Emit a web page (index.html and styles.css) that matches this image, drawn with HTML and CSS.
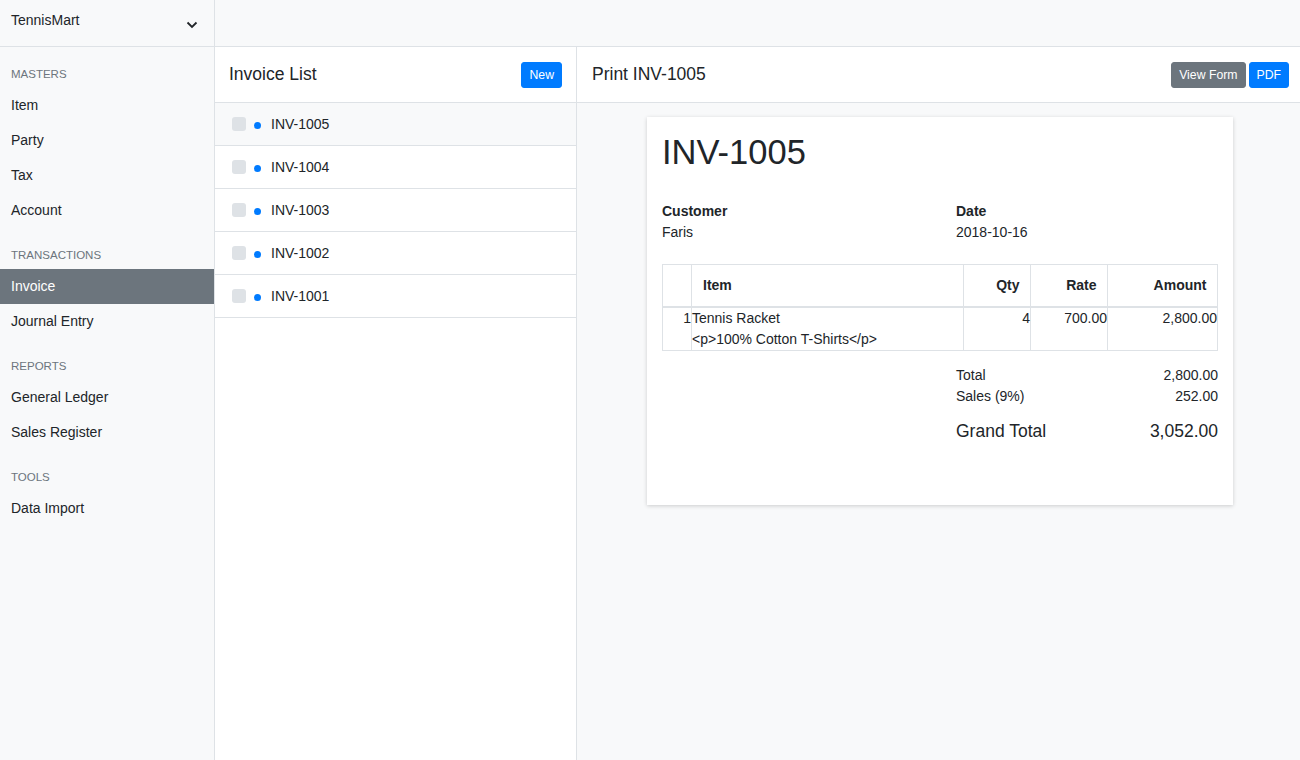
FILE: index.html
```html
<!DOCTYPE html>
<html>
<head>
<meta charset="utf-8">
<title>TennisMart</title>
<link rel="stylesheet" href="styles.css">
</head>
<body>
<div class="app">
  <aside class="sidebar">
    <div class="sidebar-head">
      <span class="brand">TennisMart</span>
      <svg class="chev" width="12" height="8" viewBox="0 0 12 8"><path d="M1.5 1.5 L6 6 L10.5 1.5" fill="none" stroke="#212529" stroke-width="1.8"/></svg>
    </div>
    <div class="nav-heading">Masters</div>
    <a class="nav-item">Item</a>
    <a class="nav-item">Party</a>
    <a class="nav-item">Tax</a>
    <a class="nav-item">Account</a>
    <div class="nav-heading">Transactions</div>
    <a class="nav-item active">Invoice</a>
    <a class="nav-item">Journal Entry</a>
    <div class="nav-heading">Reports</div>
    <a class="nav-item">General Ledger</a>
    <a class="nav-item">Sales Register</a>
    <div class="nav-heading">Tools</div>
    <a class="nav-item">Data Import</a>
  </aside>
  <main class="main">
    <div class="topbar"></div>
    <div class="panes">
      <section class="list-pane">
        <div class="pane-head">
          <h5 class="pane-title">Invoice List</h5>
          <button class="btn btn-primary">New</button>
        </div>
        <div class="list-row selected"><span class="check"></span><span class="dot"></span><span>INV-1005</span></div>
        <div class="list-row"><span class="check"></span><span class="dot"></span><span>INV-1004</span></div>
        <div class="list-row"><span class="check"></span><span class="dot"></span><span>INV-1003</span></div>
        <div class="list-row"><span class="check"></span><span class="dot"></span><span>INV-1002</span></div>
        <div class="list-row"><span class="check"></span><span class="dot"></span><span>INV-1001</span></div>
      </section>
      <section class="print-pane">
        <div class="pane-head print-head">
          <h5 class="pane-title">Print INV-1005</h5>
          <div class="btn-group">
            <button class="btn btn-secondary">View Form</button>
            <button class="btn btn-primary">PDF</button>
          </div>
        </div>
        <div class="print-body">
          <div class="doc">
            <h1 class="doc-title">INV-1005</h1>
            <div class="doc-grid">
              <div>
                <div class="label">Customer</div>
                <div>Faris</div>
              </div>
              <div>
                <div class="label">Date</div>
                <div>2018-10-16</div>
              </div>
            </div>
            <table class="items">
              <colgroup>
                <col class="c-no"><col class="c-item"><col class="c-qty"><col class="c-rate"><col class="c-amt">
              </colgroup>
              <thead>
                <tr><th></th><th class="left">Item</th><th>Qty</th><th>Rate</th><th>Amount</th></tr>
              </thead>
              <tbody>
                <tr>
                  <td class="num">1</td>
                  <td>Tennis Racket<br>&lt;p&gt;100% Cotton T-Shirts&lt;/p&gt;</td>
                  <td class="num">4</td>
                  <td class="num">700.00</td>
                  <td class="num">2,800.00</td>
                </tr>
              </tbody>
            </table>
            <div class="doc-grid totals-grid">
              <div></div>
              <div class="totals">
                <div class="t-row"><span>Total</span><span>2,800.00</span></div>
                <div class="t-row"><span>Sales (9%)</span><span>252.00</span></div>
                <div class="t-row grand"><span>Grand Total</span><span>3,052.00</span></div>
              </div>
            </div>
          </div>
        </div>
      </section>
    </div>
  </main>
</div>
</body>
</html>
```
FILE: styles.css
```css
* { box-sizing: border-box; }
html, body { margin: 0; height: 100%; }
body {
  font-family: "Liberation Sans", Arial, sans-serif;
  font-size: 14px;
  line-height: 1.5;
  color: #212529;
  background: #f8f9fa;
}
.app { display: flex; height: 100vh; }

.sidebar {
  width: 215px;
  flex: none;
  background: #f8f9fa;
  border-right: 1px solid #dee2e6;
}
.sidebar-head {
  height: 47px;
  border-bottom: 1px solid #dee2e6;
  display: flex;
  justify-content: space-between;
  padding: 10px 16px 0 11px;
}
.brand { line-height: 21px; }
.chev { margin-top: 11px; }
.nav-heading {
  padding: 20px 11px 6px;
  font-size: 11.5px;
  line-height: 15px;
  text-transform: uppercase;
  color: #6c757d;
}
.nav-item {
  display: block;
  height: 35px;
  line-height: 35px;
  padding: 0 11px;
  color: #212529;
}
.nav-item.active { background: #6c757d; color: #fff; }

.main { flex: 1; display: flex; flex-direction: column; min-width: 0; }
.topbar { height: 47px; flex: none; border-bottom: 1px solid #dee2e6; background: #f8f9fa; }
.panes { flex: 1; display: flex; min-height: 0; }

.list-pane {
  width: 362px;
  flex: none;
  background: #fff;
  border-right: 1px solid #dee2e6;
}
.pane-head {
  height: 56px;
  border-bottom: 1px solid #dee2e6;
  display: flex;
  align-items: center;
  justify-content: space-between;
  padding: 0 14px;
  background: #fff;
}
.pane-title {
  margin: 0;
  font-size: 17.5px;
  font-weight: 400;
  line-height: 1.2;
}
.btn {
  font-family: inherit;
  font-size: 12.25px;
  line-height: 1.5;
  padding: 3.5px 7px;
  border: 1px solid transparent;
  border-radius: 3px;
  color: #fff;
  height: 26px;
  cursor: pointer;
}
.btn-primary { background: #007bff; border-color: #007bff; }
.btn-secondary { background: #6c757d; border-color: #6c757d; }
.btn-group { display: flex; gap: 3px; }

.list-row {
  height: 43px;
  border-bottom: 1px solid #dee2e6;
  display: flex;
  align-items: center;
  padding-left: 17px;
}
.list-row.selected { background: #f8f9fa; }
.check {
  width: 14px; height: 14px;
  border-radius: 3px;
  background: #dee2e6;
  margin-right: 8px;
  margin-top: -1px;
}
.dot {
  width: 7px; height: 7px;
  border-radius: 50%;
  background: #007bff;
  margin-right: 10px;
  margin-top: 3px;
}

.print-pane { flex: 1; display: flex; flex-direction: column; min-width: 0; }
.print-head { padding: 0 11px 0 15px; }
.print-body { flex: 1; padding: 14px 67px 15px 70px; background: #f8f9fa; }
.doc {
  background: #fff;
  box-shadow: 0 1px 4px rgba(0, 0, 0, 0.18);
  padding: 15px 15px 60px;
}
.doc-title {
  margin: 0 0 28px;
  font-size: 34.5px;
  font-weight: 400;
  line-height: 1.2;
}
.doc-grid { display: grid; grid-template-columns: 294px 1fr; }
.label { font-weight: 700; }

.items {
  width: 100%;
  margin-top: 21px;
  border-collapse: collapse;
  table-layout: fixed;
  border: 1px solid #dee2e6;
}
.c-no { width: 29px; }
.c-item { width: 272px; }
.c-qty { width: 67px; }
.c-rate { width: 77px; }
.items th, .items td { border: 1px solid #dee2e6; }
.items th {
  padding: 10px 10.5px;
  text-align: right;
  font-weight: 700;
  line-height: 21px;
  border-bottom-width: 2px;
}
.items th.left { text-align: left; padding-left: 11px; }
.items td { padding: 0; vertical-align: top; line-height: 21px; }
.items td.num { text-align: right; }

.totals-grid { margin-top: 14px; }
.t-row { display: flex; justify-content: space-between; }
.t-row.grand { font-size: 17.5px; margin-top: 11px; }
```
